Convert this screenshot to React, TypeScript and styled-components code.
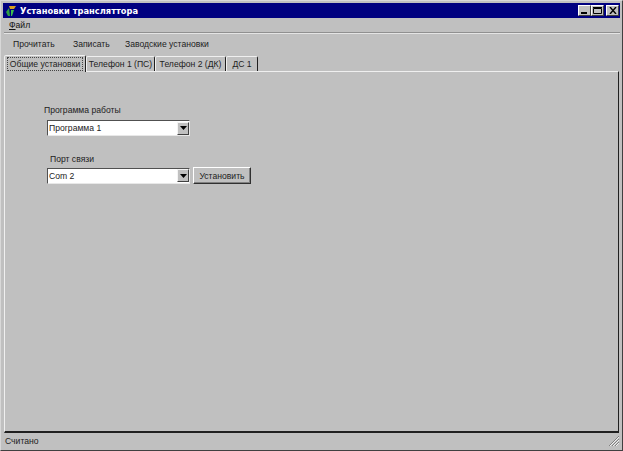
import React from "react";
import styled, { createGlobalStyle } from "styled-components";

const Global = createGlobalStyle`
  html, body { margin: 0; padding: 0; background: #c0c0c0; }
  body { font-family: "Liberation Sans", Arial, sans-serif; font-size: 8.6px; color: #111; }
  #root { width: 623px; height: 451px; overflow: hidden; }
`;

const Win = styled.div`
  box-sizing: border-box; width: 623px; height: 451px; padding: 3px 2px 3px 3px;
  background: #c0c0c0; border: 1px solid; border-color: #d8d8d8 #404040 #404040 #d8d8d8;
  display: flex; flex-direction: column; margin: 0; white-space: nowrap;
`;
const TitleBar = styled.div`
  height: 15px; flex: none; margin: -1px 0 0 -1px; display: flex; align-items: center; gap: 3px; padding: 0 1px 0 2px;
  background: #000080; color: #fff; font: bold 8.3px "DejaVu Sans", sans-serif;
`;
const Title = styled.span` flex: 1; `;
const Controls = styled.div` display: flex; align-items: center; `;
const Ctl = styled.div<{ $gap?: boolean }>`
  width: 13px; height: 11px; box-sizing: border-box; background: #c0c0c0; margin-left: ${p => (p.$gap ? 2 : 0)}px;
  border: 1px solid; border-color: #fff #404040 #404040 #fff; display: flex; align-items: center; justify-content: center;
`;
const Menu = styled.div` height: 14px; flex: none; padding: 0 0 0 5px; display: flex; align-items: center; font-size: 8.6px; `;
const Rule = styled.div` height: 2px; flex: none; border-top: 1px solid #909090; border-bottom: 1px solid #e4e4e4; box-sizing: border-box; `;
const Toolbar = styled.div` height: 20px; flex: none; display: flex; align-items: center; padding: 0 0 0 9px; font-size: 8.6px; box-sizing: border-box; `;
const ToolItem = styled.span<{ $w: number }>` width: ${p => p.$w}px; color: #222; flex: none; `;
const Tabs = styled.div` height: 17px; flex: none; display: flex; align-items: flex-end; position: relative; z-index: 1; `;
const Tab = styled.div<{ $active?: boolean; $w: number }>`
  box-sizing: border-box; width: ${p => p.$w}px; height: ${p => (p.$active ? 17 : 15)}px; flex: none;
  margin-bottom: ${p => (p.$active ? -1 : 0)}px; background: #c0c0c0; font-size: 8.6px; color: #222;
  border: 1px solid; border-bottom: none; border-color: #efefef #202020 transparent #efefef;
  border-radius: 2px 2px 0 0; display: flex; align-items: center; justify-content: center;
`;
const Focus = styled.span` outline: 1px dotted #444; padding: 1px 2px; `;
const Panel = styled.div`
  flex: 1; box-sizing: border-box; margin-right: 1px; border: 1px solid; border-color: #efefef #202020 #202020 #efefef;
  border-bottom-width: 2px; padding: 32px 0 0 39px; display: flex; flex-direction: column;
`;
const Label = styled.div<{ $indent: number; $top?: number }>`
  font-size: 8.6px; height: 12px; line-height: 12px; padding-left: ${p => p.$indent}px; margin-top: ${p => p.$top ?? 0}px; color: #222;
`;
const Row = styled.div<{ $top: number }>` display: flex; align-items: center; gap: 3px; margin-top: ${p => p.$top}px; padding-left: 3px; `;
const Combo = styled.div`
  box-sizing: border-box; width: 143px; height: 16px; background: #fff; display: flex; align-items: center;
  border: 1px solid; border-color: #505050 #e8e8e8 #e8e8e8 #505050; font-size: 8.6px; padding: 0 0 0 1px; color: #222;
`;
const ComboText = styled.span` flex: 1; `;
const Arrow = styled.div`
  width: 12px; height: 13px; box-sizing: border-box; background: #c0c0c0; border: 1px solid; border-color: #f4f4f4 #404040 #404040 #f4f4f4;
  display: flex; align-items: center; justify-content: center;
`;
const Btn = styled.div`
  box-sizing: border-box; width: 58px; height: 17px; background: #c0c0c0; font-size: 8.6px; color: #222;
  border: 1px solid; border-color: #fff #303030 #303030 #fff; box-shadow: inset -1px -1px 0 #808080;
  display: flex; align-items: center; justify-content: center;
`;
const Status = styled.div`
  height: 14px; flex: none; display: flex; align-items: center; justify-content: space-between; font-size: 8.6px; padding: 2px 0 0 1px; color: #222; box-sizing: border-box;
`;
const Logo = styled.svg` flex: none; `;

const Down = () => (
  <svg width="7" height="4" viewBox="0 0 7 4"><path d="M0 0h7L3.5 4z" fill="#000" /></svg>
);

export default function App() {
  return (
    <>
      <Global />
      <Win>
        <TitleBar>
          <Logo width="12" height="12" viewBox="0 0 12 12">
            <path d="M1 7 4 3l1 8H3z" fill="#2f9e44" />
            <path d="M4 1h7L9 4H5z" fill="#d8a020" />
            <path d="M6 5h3L7 11H6z" fill="#3fbf50" />
          </Logo>
          <Title>Установки трансляттора</Title>
          <Controls>
            <Ctl><svg width="7" height="7"><rect x="0" y="5" width="6" height="2" fill="#000" /></svg></Ctl>
            <Ctl><svg width="9" height="7"><path d="M.5 1.5h8v5h-8zM0 .5h9" fill="none" stroke="#000" /></svg></Ctl>
            <Ctl $gap><svg width="8" height="7"><path d="M1 0l6 7M7 0 1 7" stroke="#000" strokeWidth="1.4" /></svg></Ctl>
          </Controls>
        </TitleBar>
        <Menu><span><u>Ф</u>айл</span></Menu>
        <Rule />
        <Toolbar>
          <ToolItem $w={60}>Прочитать</ToolItem>
          <ToolItem $w={52}>Записать</ToolItem>
          <ToolItem $w={90}>Заводские установки</ToolItem>
        </Toolbar>
        <Tabs>
          <Tab $active $w={82}><Focus>Общие установки</Focus></Tab>
          <Tab $w={69}>Телефон 1 (ПС)</Tab>
          <Tab $w={71}>Телефон 2 (ДК)</Tab>
          <Tab $w={32}>ДС 1</Tab>
        </Tabs>
        <Panel>
          <Label $indent={0}>Программа работы</Label>
          <Row $top={4}>
            <Combo><ComboText>Программа 1</ComboText><Arrow><Down /></Arrow></Combo>
          </Row>
          <Label $indent={6} $top={17}>Порт связи</Label>
          <Row $top={2}>
            <Combo><ComboText>Com 2</ComboText><Arrow><Down /></Arrow></Combo>
            <Btn>Установить</Btn>
          </Row>
        </Panel>
        <Status>
          <span>Считано</span>
          <svg width="12" height="12" viewBox="0 0 12 12">
            <path d="M11 1 1 11M11 4 4 11M11 7 7 11" stroke="#808080" fill="none" />
            <path d="M11 2 2 11M11 5 5 11M11 8 8 11" stroke="#f0f0f0" fill="none" />
          </svg>
        </Status>
      </Win>
    </>
  );
}
